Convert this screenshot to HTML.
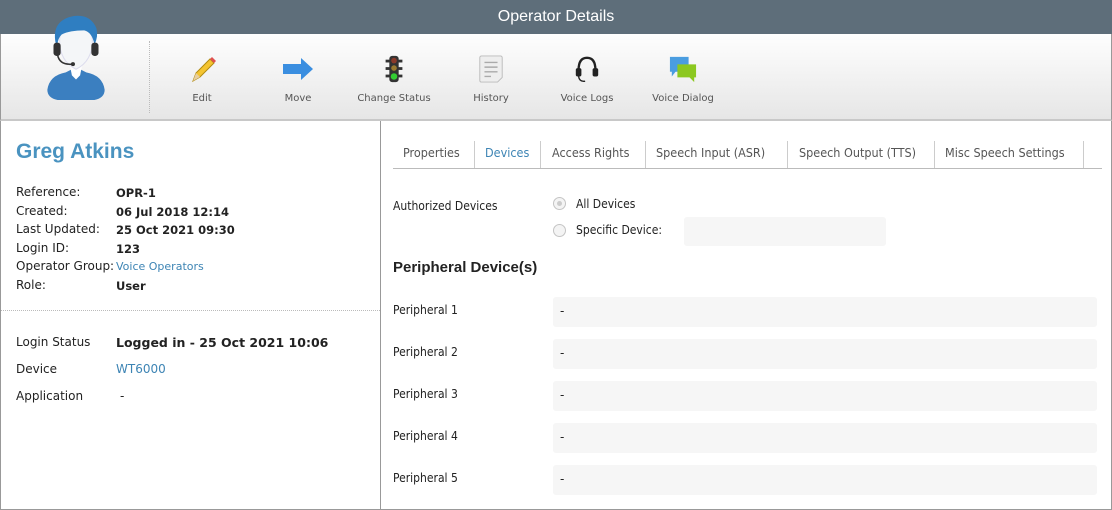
<!DOCTYPE html>
<html><head><style>
*{margin:0;padding:0;box-sizing:border-box}
body{width:1112px;height:510px;overflow:hidden;background:#fff;font-family:"DejaVu Sans","Liberation Sans",sans-serif;font-size:12px;color:#222;position:relative}
.title{position:absolute;left:0;top:0;width:1112px;height:34px;background:#5e6e7a;color:#fff;font-family:"Liberation Sans",sans-serif;font-size:16px;text-align:center;line-height:34px}
.tb{position:absolute;left:0;top:34px;width:1112px;height:87px;background:linear-gradient(#fefefe,#e6e6e6);border-bottom:2px solid #c8c8c8;border-left:1px solid #999;border-right:1px solid #999}
.sep{position:absolute;left:148px;top:7px;height:72px;border-left:1px dotted #bbb}
.btn{position:absolute;top:21px;width:96px;text-align:center;font-size:10px;color:#555}
.btn svg{display:block;margin:0 auto 10px}
.a{position:absolute;white-space:nowrap}
.left{position:absolute;left:0;top:121px;width:381px;height:389px;border-left:1px solid #999;border-right:1px solid #999;border-bottom:1px solid #999}
.right{position:absolute;left:381px;top:121px;width:731px;height:389px;border-right:1px solid #999;border-bottom:1px solid #999}
.lbl{font-size:12px;color:#222}
.b{font-weight:bold;font-size:11.5px}
.blue{color:#3d84b4}
.tab{position:absolute;top:145px;font-size:12.5px;color:#555;font-family:"DejaVu Sans Condensed","DejaVu Sans",sans-serif}
.tsep{position:absolute;top:141px;height:27px;border-left:1px solid #ccc}
.box{position:absolute;left:553px;width:544px;height:30px;background:#f6f6f6;border-radius:3px;padding-left:7px;line-height:28px}
.radio{position:absolute;width:13px;height:13px;border-radius:50%;border:1px solid #c4c4c4;background:#f4f4f4}
</style></head><body>
<div class="title">Operator Details</div>
<div class="tb">
<svg style="position:absolute;left:42px;top:-20px" width="66" height="88" viewBox="0 0 64 86">
<path d="M4 74 Q6 60 22 57 L28 54 L36 54 L42 57 Q58 60 60 74 Q60 82 50 84 L14 84 Q4 82 4 74Z" fill="#3b7fc0"/>
<path d="M26 50 L38 50 L36 60 L32 64 L28 60Z" fill="#fff"/>
<path d="M16 26 Q16 10 32 8 Q48 10 48 26 Q48 46 32 54 Q16 46 16 26Z" fill="#f4f6f8" stroke="#dde" />
<path d="M12 28 Q8 6 30 2 Q46 0 52 14 Q54 22 50 30 Q48 18 40 16 Q26 16 18 20 Q14 24 14 30Z" fill="#2f7ec1"/>
<rect x="10" y="28" width="7" height="13" rx="3" fill="#333"/><rect x="47" y="28" width="7" height="13" rx="3" fill="#333"/>
<path d="M14 40 Q16 50 28 49" stroke="#333" stroke-width="1.5" fill="none"/><circle cx="29" cy="49" r="2" fill="#333"/>
</svg>
<div class="sep"></div>
<div class="btn" style="left:153px"><svg width="30" height="28" viewBox="0 0 30 28"><path d="M6 26 L9 18 L23 4 L27 8 L13 22Z" fill="#f4c430" stroke="#b08a10"/><path d="M23 4 L25 2 L29 6 L27 8Z" fill="#e05050"/><path d="M6 26 L9 18 L13 22Z" fill="#e8cfa0"/></svg>Edit</div>
<div class="btn" style="left:249px"><svg width="34" height="28" viewBox="0 0 34 28"><path d="M2 9 L20 9 L20 3 L32 14 L20 25 L20 19 L2 19Z" fill="#3a8ee0"/></svg>Move</div>
<div class="btn" style="left:345px"><svg width="22" height="28" viewBox="0 0 22 30"><rect x="6" y="1" width="10" height="28" rx="3" fill="#333"/><rect x="2" y="5" width="18" height="3" fill="#333"/><rect x="2" y="13" width="18" height="3" fill="#333"/><rect x="2" y="21" width="18" height="3" fill="#333"/><circle cx="11" cy="6" r="3" fill="#8a3a2a"/><circle cx="11" cy="14" r="3" fill="#9a7a30"/><circle cx="11" cy="23" r="3.5" fill="#3c3"/></svg>Change Status</div>
<div class="btn" style="left:442px"><svg width="28" height="28" viewBox="0 0 28 30"><path d="M2 3 Q2 1 4 1 L24 1 Q26 1 26 3 L26 24 L21 29 L4 29 Q2 29 2 27Z" fill="#eee" stroke="#bbb"/><path d="M7 8H21M7 13H21M7 18H21M7 23H14" stroke="#aaa" stroke-width="1.5"/></svg>History</div>
<div class="btn" style="left:538px"><svg width="30" height="28" viewBox="0 0 30 30"><path d="M6 16 Q6 3 15 3 Q24 3 24 16" stroke="#222" stroke-width="2.5" fill="none"/><rect x="3" y="14" width="6" height="9" rx="2" fill="#222"/><rect x="21" y="14" width="6" height="9" rx="2" fill="#222"/><path d="M6 23 Q7 29 13 28" stroke="#222" stroke-width="1.5" fill="none"/></svg>Voice Logs</div>
<div class="btn" style="left:634px"><svg width="32" height="28" viewBox="0 0 32 30"><path d="M2 2 H22 V18 H8 L4 23 V18 H2Z" fill="#4a9de0"/><path d="M10 10 H30 V24 H28 V29 L23 24 H10Z" fill="#8cc820"/></svg>Voice Dialog</div>
</div>
<div class="left"></div>
<div class="a" style="left:16px;top:140px;font-family:'Liberation Sans',sans-serif;font-weight:bold;font-size:21px;color:#4a93c0">Greg Atkins</div>
<div class="a lbl" style="left:16px;top:185px">Reference:</div><div class="a b" style="left:116px;top:186px">OPR-1</div>
<div class="a lbl" style="left:16px;top:204px">Created:</div><div class="a b" style="left:116px;top:205px">06 Jul 2018 12:14</div>
<div class="a lbl" style="left:16px;top:222px">Last Updated:</div><div class="a b" style="left:116px;top:223px">25 Oct 2021 09:30</div>
<div class="a lbl" style="left:16px;top:241px">Login ID:</div><div class="a b" style="left:116px;top:242px">123</div>
<div class="a lbl" style="left:16px;top:259px">Operator Group:</div><div class="a blue" style="left:116px;top:260px;font-size:11px">Voice Operators</div>
<div class="a lbl" style="left:16px;top:278px">Role:</div><div class="a b" style="left:116px;top:279px">User</div>
<div class="a" style="left:1px;top:310px;width:379px;border-top:1px dotted #bbb"></div>
<div class="a lbl" style="left:16px;top:335px">Login Status</div><div class="a" style="left:116px;top:335px;font-weight:bold;font-size:12.5px">Logged in - 25 Oct 2021 10:06</div>
<div class="a lbl" style="left:16px;top:362px">Device</div><div class="a blue" style="left:116px;top:362px">WT6000</div>
<div class="a lbl" style="left:16px;top:389px">Application</div><div class="a" style="left:120px;top:389px">-</div>
<div class="right"></div>
<div class="tab" style="left:403px">Properties</div>
<div class="tsep" style="left:474px"></div>
<div class="tab" style="left:485px;color:#3d84b4">Devices</div>
<div class="tsep" style="left:540px"></div>
<div class="tab" style="left:552px">Access Rights</div>
<div class="tsep" style="left:645px"></div>
<div class="tab" style="left:656px">Speech Input (ASR)</div>
<div class="tsep" style="left:787px"></div>
<div class="tab" style="left:799px">Speech Output (TTS)</div>
<div class="tsep" style="left:934px"></div>
<div class="tab" style="left:945px">Misc Speech Settings</div>
<div class="tsep" style="left:1083px"></div>
<div class="a" style="left:393px;top:168px;width:709px;border-top:1px solid #bbb"></div>
<div class="a lbl" style="left:393px;top:199px;font-family:'DejaVu Sans Condensed',sans-serif">Authorized Devices</div>
<div class="radio" style="left:553px;top:197px"><div style="width:5px;height:5px;border-radius:50%;background:#ccc;margin:3px"></div></div>
<div class="a lbl" style="left:576px;top:197px;font-family:'DejaVu Sans Condensed',sans-serif">All Devices</div>
<div class="radio" style="left:553px;top:224px"></div>
<div class="a lbl" style="left:576px;top:223px;font-family:'DejaVu Sans Condensed',sans-serif">Specific Device:</div>
<div class="a" style="left:684px;top:217px;width:202px;height:29px;background:#f6f6f6;border-radius:3px"></div>
<div class="a" style="left:393px;top:259px;font-weight:bold;font-size:15px;font-family:'Liberation Sans',sans-serif">Peripheral Device(s)</div>
<div class="a lbl" style="left:393px;top:303px;font-family:'DejaVu Sans Condensed',sans-serif">Peripheral 1</div><div class="box" style="top:297px">-</div>
<div class="a lbl" style="left:393px;top:345px;font-family:'DejaVu Sans Condensed',sans-serif">Peripheral 2</div><div class="box" style="top:339px">-</div>
<div class="a lbl" style="left:393px;top:387px;font-family:'DejaVu Sans Condensed',sans-serif">Peripheral 3</div><div class="box" style="top:381px">-</div>
<div class="a lbl" style="left:393px;top:429px;font-family:'DejaVu Sans Condensed',sans-serif">Peripheral 4</div><div class="box" style="top:423px">-</div>
<div class="a lbl" style="left:393px;top:471px;font-family:'DejaVu Sans Condensed',sans-serif">Peripheral 5</div><div class="box" style="top:465px">-</div>
</body></html>
